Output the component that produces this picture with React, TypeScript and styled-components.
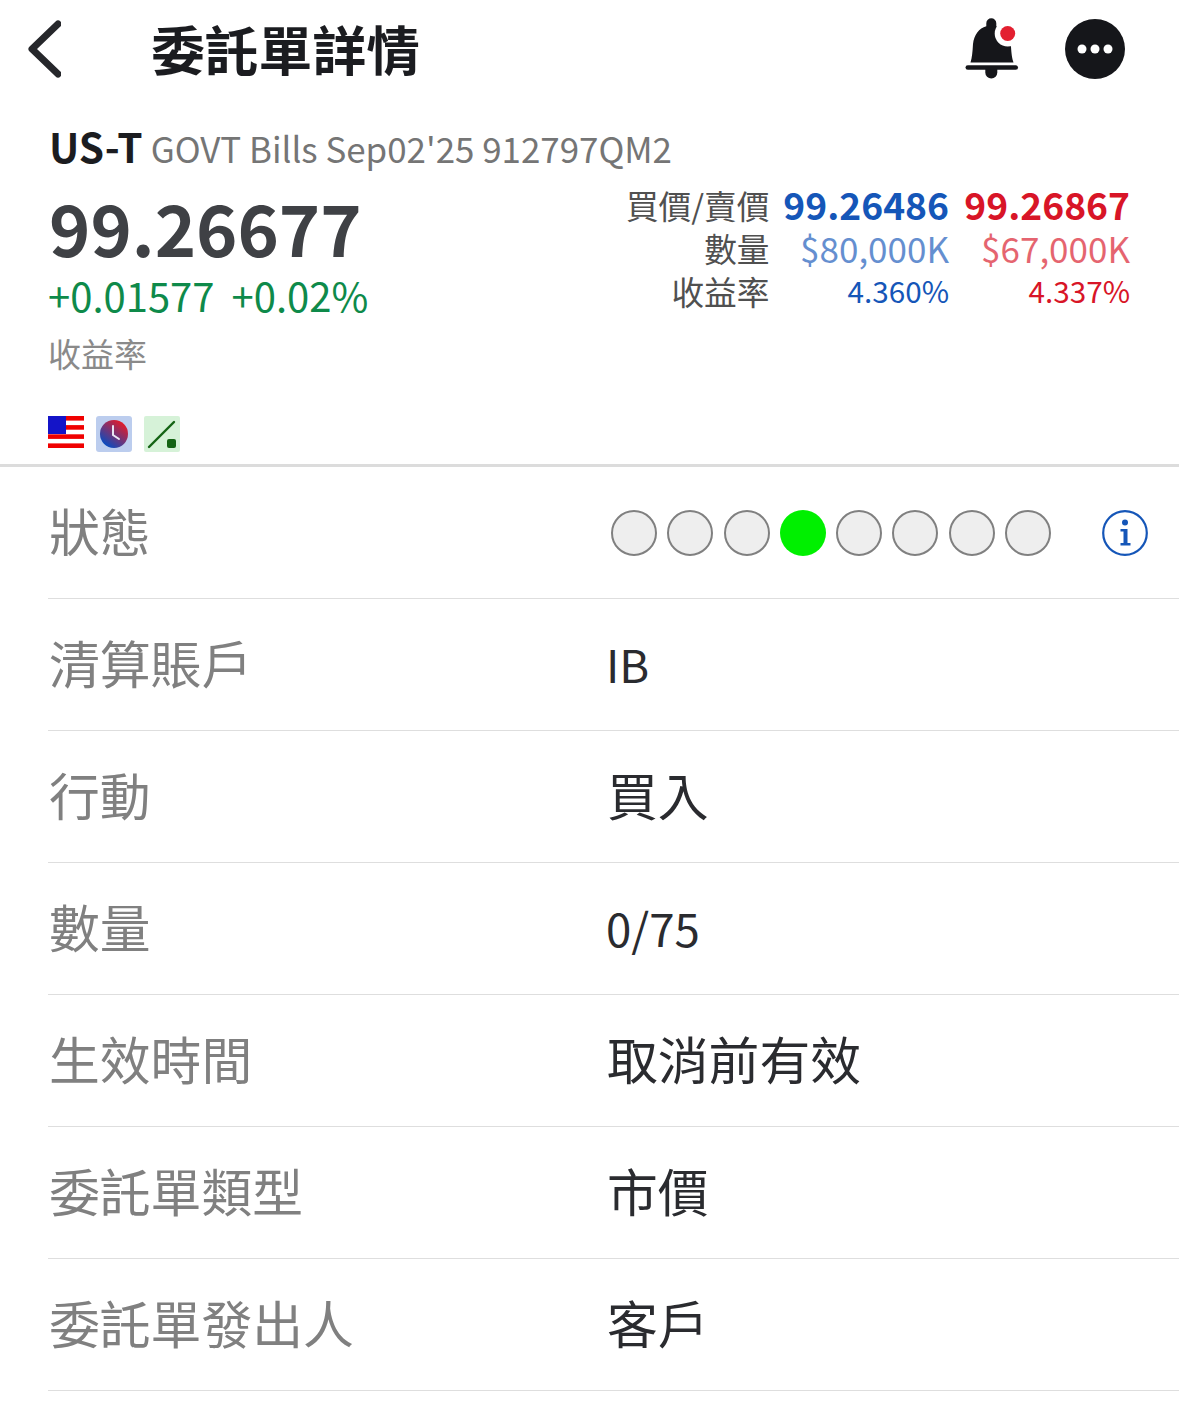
import { Fragment } from 'react';
import styled, { createGlobalStyle } from 'styled-components';

const GlobalStyle = createGlobalStyle`
  html, body {
    margin: 0;
    padding: 0;
    background: #fff;
    font-family: "Noto Sans CJK TC", "Noto Sans", sans-serif;
  }
`;

const Page = styled.div`
  width: 1179px;
  height: 1423px;
  overflow: hidden;
  background: #fff;
`;

const TopBar = styled.header`
  display: flex;
  align-items: center;
  height: 100px;
  padding-left: 27px;
`;

const BackButton = styled.svg`
  width: 34px;
  height: 58px;
  flex: none;
  margin-top: -2px;
`;

const Title = styled.h1`
  margin: -5px 0 0 90px;
  font-size: 53.800px;
  line-height: 60px;
  font-weight: 700;
  color: #1b1c20;
  flex: 1;
`;

const TopActions = styled.div`
  display: flex;
  align-items: center;
  margin: -3px 54px 0 0;
  gap: 46px;
`;

const Quote = styled.section`
  height: 367px;
  padding: 20px 49px 0 49px;
  box-sizing: border-box;
  border-bottom: 3px solid #dcdcdc;
`;

const SymbolLine = styled.div`
  display: flex;
  align-items: baseline;
  height: 56px;
  line-height: 56px;
  white-space: nowrap;
  margin-top: -2px;
`;

const Symbol = styled.span`
  font-size: 40.500px;
  font-weight: 700;
  color: #1b1c20;
`;

const Contract = styled.span`
  margin-left: 8px;
  font-size: 34.900px;
  color: #757575;
`;

const QuoteBody = styled.div`
  display: flex;
  justify-content: space-between;
  height: 242px;
`;

const LastBlock = styled.div`
  display: flex;
  flex-direction: column;
`;

const LastPrice = styled.div`
  font-size: 70.200px;
  line-height: 86px;
  font-weight: 700;
  color: #3f4145;
  margin-top: 10px;
`;

const Change = styled.div`
  display: flex;
  gap: 17px;
  font-size: 40px;
  line-height: 48px;
  color: #0e8a4a;
  margin: 1px 0 0 -1px;
`;

const Caption = styled.div`
  font-size: 33px;
  line-height: 44px;
  color: #8a8a8a;
  margin: 12px 0 0 -1px;
`;

const BidAsk = styled.div`
  display: grid;
  grid-template-columns: auto 179.500px 181px;
  grid-auto-rows: 43px;
  align-content: start;
  align-items: center;
  justify-items: end;
  margin-top: 9px;
`;

const BidLabel = styled.div`
  font-size: 32.700px;
  line-height: 43px;
  color: #505050;
`;

const BidValue = styled.div<{ $side: 'bid' | 'ask'; $kind: 'price' | 'size' | 'yield' }>`
  line-height: 43px;
  color: ${p => (p.$side === 'bid' ? '#1556b8' : '#d81527')};
  font-size: ${p => (p.$kind === 'price' ? 37.2 : p.$kind === 'size' ? 35 : 29.7)}px;
  font-weight: ${p => (p.$kind === 'price' ? 700 : 400)};
  opacity: ${p => (p.$kind === 'size' ? 0.66 : 1)};
`;

const Badges = styled.div`
  display: flex;
  gap: 12px;
  margin-left: -1px;
`;

const Badge = styled.svg`
  width: 36px;
  height: 36px;
  display: block;
`;

const Rows = styled.div`
  padding-left: 48px;
`;

const Row = styled.div`
  display: flex;
  align-items: center;
  height: 132px;
  box-sizing: border-box;
  border-bottom: 1px solid #dedede;
`;

const RowLabel = styled.div`
  width: 557px;
  flex: none;
  padding-left: 1px;
  font-size: 50.800px;
  line-height: 60px;
  color: #808080;
  margin-top: -6px;
`;

const RowValue = styled.div<{ $latin?: boolean }>`
  font-size: ${p => (p.$latin ? 45.6 : 50.8)}px;
  line-height: 60px;
  color: #2a2b2f;
  margin: ${p => (p.$latin ? -3 : -6)}px 0 0 ${p => (p.$latin ? 0 : 1)}px;
`;

const Steps = styled.div`
  display: flex;
  align-items: center;
  gap: 10.290px;
  margin-left: 5px;
`;

const Step = styled.span<{ $active?: boolean }>`
  width: 46px;
  height: 46px;
  box-sizing: border-box;
  border-radius: 50%;
  background: ${p => (p.$active ? '#00f000' : '#eeeeee')};
  border: ${p => (p.$active ? 'none' : '2px solid #808080')};
`;

const InfoIcon = styled.svg`
  width: 46px;
  height: 46px;
  margin-left: 51px;
`;

const rows = [
  { label: '清算賬戶', value: 'IB', latin: true },
  { label: '行動', value: '買入' },
  { label: '數量', value: '0/75', latin: true },
  { label: '生效時間', value: '取消前有效' },
  { label: '委託單類型', value: '市價' },
  { label: '委託單發出人', value: '客戶' },
];

const bidAsk = [
  { label: '買價/賣價', kind: 'price', bid: '99.26486', ask: '99.26867' },
  { label: '數量', kind: 'size', bid: '$80,000K', ask: '$67,000K' },
  { label: '收益率', kind: 'yield', bid: '4.360%', ask: '4.337%' },
] as const;

const BellIcon = () => (
  <svg width="54" height="64" viewBox="0 0 54 64">
    <path
      fill="#15161a"
      d="M26.300 1.200a5 5 0 0 1 5 5v3C40 12 45 20 46 30c.5 7 1 11 2.500 15.500h-43C7 41 7.500 35 8 27c1-9 6-16 13.300-17.800v-3a5 5 0 0 1 5-5z"
    />
    <circle cx="42.700" cy="16.500" r="13" fill="#fff" />
    <circle cx="42.700" cy="16.500" r="7.500" fill="#e32030" />
    <rect x="0.500" y="48.200" width="52.500" height="4.600" rx="2.300" fill="#15161a" />
    <path fill="#15161a" d="M20.300 52h12v3.500a6 6 0 0 1-12 0z" />
  </svg>
);

const MoreIcon = () => (
  <svg width="60" height="60" viewBox="0 0 60 60">
    <circle cx="30" cy="30" r="30" fill="#15161a" />
    <circle cx="17" cy="30" r="4.500" fill="#fff" />
    <circle cx="30" cy="30" r="4.500" fill="#fff" />
    <circle cx="43" cy="30" r="4.500" fill="#fff" />
  </svg>
);

const App = () => {
  return (
    <Page>
      <GlobalStyle />
      <TopBar>
        <BackButton viewBox="0 0 34 58">
          <path d="M31 4 5 29l26 25" fill="none" stroke="#26272b" strokeWidth="7" strokeLinecap="round" strokeLinejoin="round" />
        </BackButton>
        <Title>委託單詳情</Title>
        <TopActions>
          <BellIcon />
          <MoreIcon />
        </TopActions>
      </TopBar>

      <Quote>
        <SymbolLine>
          <Symbol>US-T</Symbol>
          <Contract>GOVT Bills Sep02'25 912797QM2</Contract>
        </SymbolLine>
        <QuoteBody>
          <LastBlock>
            <LastPrice>99.26677</LastPrice>
            <Change>
              <span>+0.01577</span>
              <span>+0.02%</span>
            </Change>
            <Caption>收益率</Caption>
          </LastBlock>
          <BidAsk>
            {bidAsk.map(line => (
              <Fragment key={line.label}>
                <BidLabel>{line.label}</BidLabel>
                <BidValue $side="bid" $kind={line.kind}>{line.bid}</BidValue>
                <BidValue $side="ask" $kind={line.kind}>{line.ask}</BidValue>
              </Fragment>
            ))}
          </BidAsk>
        </QuoteBody>
        <Badges>
          <Badge viewBox="0 0 36 36">
            <rect y="0" width="36" height="32" rx="1" fill="#fff" />
            <rect y="0" width="36" height="4.600" fill="#f00000" />
            <rect y="9.100" width="36" height="4.600" fill="#f00000" />
            <rect y="18.300" width="36" height="4.600" fill="#f00000" />
            <rect y="27.400" width="36" height="4.600" fill="#f00000" />
            <rect width="18" height="18" fill="#1414c8" />
          </Badge>
          <Badge viewBox="0 0 36 36">
            <defs>
              <linearGradient id="clockFill" x1="0.800" y1="0.100" x2="0.200" y2="0.900">
                <stop offset="0" stopColor="#e01c2c" />
                <stop offset="1" stopColor="#0a4cc0" />
              </linearGradient>
            </defs>
            <rect width="36" height="36" rx="3" fill="#bccdee" />
            <circle cx="18" cy="18" r="14" fill="url(#clockFill)" />
            <path d="M17 10v9l6 4" fill="none" stroke="#e8e8f4" strokeWidth="2" strokeLinecap="round" />
          </Badge>
          <Badge viewBox="0 0 36 36">
            <rect width="36" height="36" rx="2" fill="#d6f2d8" />
            <path d="M5 31 30 6" stroke="#146414" strokeWidth="2.400" strokeLinecap="round" />
            <rect x="23" y="23" width="9" height="9" rx="2" fill="#146414" />
          </Badge>
        </Badges>
      </Quote>

      <Rows>
        <Row>
          <RowLabel>狀態</RowLabel>
          <Steps>
            {[0, 1, 2, 3, 4, 5, 6, 7].map(i => (
              <Step key={i} $active={i === 3} />
            ))}
          </Steps>
          <InfoIcon viewBox="0 0 46 46">
            <circle cx="23" cy="23" r="21.800" fill="none" stroke="#1556b8" strokeWidth="2.200" />
            <circle cx="23" cy="12.500" r="3" fill="#1556b8" />
            <path d="M18.500 19h7v14h3v2.500h-10V33h3V21.500h-3z" fill="#1556b8" />
          </InfoIcon>
        </Row>
        {rows.map(row => (
          <Row key={row.label}>
            <RowLabel>{row.label}</RowLabel>
            <RowValue $latin={row.latin}>{row.value}</RowValue>
          </Row>
        ))}
      </Rows>
    </Page>
  );
};

export default App;
